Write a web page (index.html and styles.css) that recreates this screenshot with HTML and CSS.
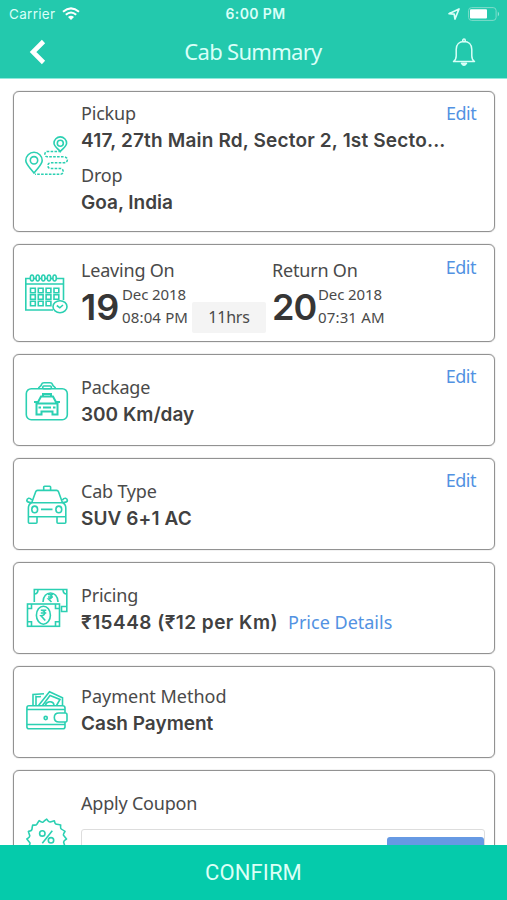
FILE: index.html
```html
<!DOCTYPE html>
<html lang="en">
<head>
<meta charset="utf-8">
<title>Cab Summary</title>
<link rel="stylesheet" href="styles.css">
</head>
<body>
<div class="screen">
  <header class="header">
    <div class="status">
      <div class="status-left"><span class="carrier">Carrier</span>
        <svg class="wifi" viewBox="0 0 18 13" width="18" height="13" fill="none" stroke="currentColor" stroke-width="2"><path d="M1 4.8Q9-2 17 4.8M3.8 7.8Q9 3.2 14.2 7.8"/><path d="M6 10Q9 7.6 12 10L9 13Z" fill="currentColor" stroke="none"/></svg>
      </div>
      <span class="clock">6:00 PM</span>
      <div class="status-right">
        <svg viewBox="0 0 12 12" width="12" height="12" fill="none" stroke="currentColor" stroke-width="1.7" stroke-linejoin="round"><path d="M1 5.7 11 1 7 11 6.2 6.1Z"/></svg>
        <svg viewBox="0 0 32 14" width="32" height="14"><rect x=".6" y=".6" width="27.5" height="12.8" rx="3" fill="none" stroke="#7fdccb"/><rect x="2" y="2.2" width="17" height="9.4" rx="1" fill="#fff"/><path d="M29.8 4.5Q32.5 7 29.8 9.5Z" fill="#8fe3d4"/></svg>
      </div>
    </div>
    <div class="nav">
      <svg class="back" viewBox="0 0 17 26" width="17" height="26" fill="none" stroke="#fff" stroke-width="4.6"><path d="M14.5 2.5 4 13 14.5 23.5"/></svg>
      <h1 class="title">Cab Summary</h1>
      <svg class="bell" viewBox="0 0 24 29" width="24" height="29" fill="none" stroke="currentColor" stroke-width="1.5" stroke-linejoin="round"><path d="M1.500 23.500H22.500Q19.800 21.500 19.800 18V11.500C19.800 6.500 16.500 3.500 12 3.500S4.200 6.500 4.200 11.500V18Q4.200 21.500 1.500 23.500Z"/><circle cx="12" cy="2.400" r="1.300"/><path d="M9.500 25.300Q12 29 14.500 25.300Z" fill="currentColor"/></svg>
    </div>
  </header>

  <main class="cards">
    <section class="card card-route">
      <svg class="icon" viewBox="25 139.500 44 44"><path d="M34 172.500C30 167 25.800 164 25.800 160A8.200 8.200 0 0 1 42.200 160C42.200 164 38 167 34 172.500Z"/><circle cx="34" cy="159.800" r="3.700"/><path d="M60.300 151C57 147.500 54 145.500 54 142.700A6.300 6.300 0 0 1 66.600 142.700C66.600 145.500 63.600 147.500 60.300 151Z"/><circle cx="60.300" cy="142.700" r="3"/><path stroke-dasharray="2.600 1.300" d="M61 151H47.500C44 151 44 156.300 47.500 156.300H64C68.500 156.300 68.500 162.300 64 162.300H50.500C47 162.300 47 168 50.500 168H60.500C64 168 64 173.800 60.500 173.800H35"/></svg>
      <div class="body">
        <div class="label">Pickup</div>
        <div class="value v-addr">417, 27th Main Rd, Sector 2, 1st Secto...</div>
        <div class="label second">Drop</div>
        <div class="value">Goa, India</div>
      </div>
      <a class="edit">Edit</a>
    </section>

    <section class="card card-dates">
      <svg class="icon" viewBox="25 271 44 44"><path d="M53 310H25.800V278.500H63.500V300M25.800 284H63.500"/><g fill="#fff"><ellipse cx="32" cy="278" rx="1.700" ry="3"/><ellipse cx="37.700" cy="278" rx="1.700" ry="3"/><ellipse cx="43.300" cy="278" rx="1.700" ry="3"/><ellipse cx="49" cy="278" rx="1.700" ry="3"/><ellipse cx="54.600" cy="278" rx="1.700" ry="3"/></g><path d="M30.500 288.300h4.800v4.500h-4.800zM38.300 288.300h4.800v4.500h-4.800zM46.100 288.300h4.800v4.500h-4.800zM54 288.300h4.800v4.500h-4.800zM30.500 294.800h4.800v4.500h-4.800zM38.300 294.800h4.800v4.500h-4.800zM46.100 294.800h4.800v4.500h-4.800zM54 294.800h4.800v4.500h-4.800zM30.500 301.300h4.800v4.500h-4.800zM38.300 301.300h4.800v4.500h-4.800zM46.100 301.300h4.800v4.500h-4.800z"/><ellipse cx="60" cy="306.700" rx="7" ry="6" fill="#fff"/><path d="M56.800 305.500 59.800 307.800 63 305"/></svg>
      <div class="body trip">
        <div class="leg">
          <div class="label">Leaving On</div>
          <div class="date"><span class="day">19</span><span class="when"><span>Dec 2018</span><span class="time">08:04 PM</span></span></div>
        </div>
        <div class="hours">11hrs</div>
        <div class="leg">
          <div class="label">Return On</div>
          <div class="date"><span class="day day-wide">20</span><span class="when"><span>Dec 2018</span><span class="time">07:31 AM</span></span></div>
        </div>
      </div>
      <a class="edit">Edit</a>
    </section>

    <section class="card">
      <svg class="icon" viewBox="25 378 44 44"><rect x="26.300" y="388.700" width="41" height="31" rx="5"/><path d="M38.500 388.700C38.500 386.500 41 387 41.500 384.500Q42 382.700 44 382.700H50Q52 382.700 52.500 384.500C53 387 55.500 386.500 55.500 388.700"/><rect x="42.800" y="386" width="8.500" height="2.700" rx="1"/><path stroke-width="2" d="M43 396.500V394H51V396.500M37.800 402.500 41 396.500H53L56.200 402.500M34 402H37.800V404M60 402H56.200V404M36.500 403.500H57.500V414.500H52.500V411.500H41.500V414.500H36.500ZM43 407.500H51M38.500 407.500H41M53 407.500H55.500"/></svg>
      <div class="body"><div class="label">Package</div><div class="value">300 Km/day</div></div>
      <a class="edit">Edit</a>
    </section>

    <section class="card">
      <svg class="icon" viewBox="25 482 44 44"><path d="M43.700 490V487Q43.700 486.300 44.500 486.300H49.800Q50.600 486.300 50.600 487V490M31.700 502.700 35.700 491.800Q36.200 490.400 37.600 490.400H56.600Q58 490.400 58.500 491.800L62.500 502.700M31.700 502.700H62.500Q65.800 504.200 65.800 508V516.700H28.400V508Q28.400 504.200 31.700 502.700ZM28.400 516.700V522.200Q28.400 523.200 29.400 523.200H36Q37 523.200 37 522.200V516.700M57 516.700V522.200Q57 523.200 58 523.200H64.800Q65.800 523.200 65.800 522.200V516.700M41 509.400H52.500M31.700 500Q30.500 498 28.600 498.200Q26.800 498.800 26.800 500.500Q27.200 502.500 31 502.500M62.500 500Q63.700 498 65.600 498.200Q67.400 498.800 67.400 500.500Q67 502.500 63 502.500"/><ellipse cx="34.700" cy="509.400" rx="2.900" ry="3.300"/><ellipse cx="58.800" cy="509.400" rx="2.900" ry="3.300"/></svg>
      <div class="body"><div class="label">Cab Type</div><div class="value v-suv">SUV 6+1 AC</div></div>
      <a class="edit">Edit</a>
    </section>

    <section class="card">
      <svg class="icon" viewBox="25 586 44 44"><path d="M34.300 602V589.500H66.800V611.500H61.500V606.500H66.800M34.300 594Q38 594 38 589.500M63 589.500Q63 594 66.800 594M43 602C43 590 58 590 58 602"/><rect x="27.500" y="604" width="32" height="22.300"/><ellipse cx="43.400" cy="615.200" rx="7" ry="9"/><path d="M27.500 608.500H31.500V604M59.500 608.500H55.500V604M27.500 621.800H31.500V626.300M59.500 621.800H55.500V626.300"/><path d="M40.800 610.300H46.300M40.800 613H46.300M40.800 610.300C46 610 46 615.700 41 615.700L45.300 620.500M48 594.500H53M48 597H53M48.500 594.500C52.500 594.500 52.500 599 48.500 599L51.500 602"/></svg>
      <div class="body"><div class="label">Pricing</div><div class="value-row"><span class="value v-price">₹15448 (₹12 per Km)</span><a class="link">Price Details</a></div></div>
    </section>

    <section class="card card-pay">
      <svg class="icon" viewBox="25 690 44 44"><path d="M33 705.500V694.500L44 693.800M41 696.500Q38 697 36 696.500V705.500M38.500 705.500 49.500 691.800 62.500 697.800V705.500M42.500 705.500 50 695.500 60 699.500 56.500 705.500M45.500 705C47 700.500 53.500 701 54 705"/><path d="M65 712.800V708Q65 705.800 62.500 705.800H28.900Q26.900 705.800 26.900 708V726.800Q26.900 728.800 28.900 728.800H63Q65 728.800 65 726.800V722M26.900 709.500H65M26.900 724.500H65M65.500 713H59Q54.300 713 54.300 717.500T59 722H65.500Q67 722 67 720V715Q67 713 65.500 713Z"/><circle cx="45.700" cy="718" r="1.600"/></svg>
      <div class="body"><div class="label t-pay">Payment Method</div><div class="value">Cash Payment</div></div>
    </section>

    <section class="card card-coupon">
      <svg class="icon" viewBox="25 818 44 44"><path stroke-linejoin="round" transform="translate(46.700 839)" d="M0-19.800Q2-16.500 3.500-17T7.600-18.300Q8.200-14.800 9.900-14.700T14-14Q13.500-10.500 14.700-9.900T18.300-7.600Q16-4.600 17-3.500T19.800 0Q16.500 2 17 3.500T18.300 7.600Q14.800 8.200 14.700 9.900T14 14Q10.500 13.500 9.900 14.700T7.600 18.300Q4.600 16 3.500 17T0 19.800Q-2 16.500-3.500 17T-7.600 18.300Q-8.200 14.800-9.900 14.700T-14 14Q-13.500 10.500-14.700 9.900T-18.300 7.600Q-16 4.600-17 3.500T-19.800 0Q-16.500-2-17-3.500T-18.300-7.600Q-14.800-8.200-14.700-9.900T-14-14Q-10.500-13.500-9.900-14.700T-7.600-18.300Q-4.600-16-3.500-17T0-19.800Z"/><circle cx="42.300" cy="833.400" r="2.700"/><circle cx="51" cy="840.300" r="2.700"/><path d="M42.300 843.300 52.300 830.700"/></svg>
      <div class="body"><div class="label">Apply Coupon</div><div class="coupon"><div class="apply"></div></div></div>
    </section>
  </main>

  <footer class="confirm">CONFIRM</footer>
</div>
</body>
</html>
```
FILE: styles.css
```css
* { box-sizing: border-box; }
body { margin: 0; background: #fff; }
.screen {
  width: 507px; height: 900px; overflow: hidden;
  display: flex; flex-direction: column;
  font-family: "Noto Sans", sans-serif; color: #4a4a4a;
}
.header { flex: none; height: 79px; background: #23c9ad; border-bottom: 1px solid #8eeadc; color: #d9fff8; }
.status {
  height: 27px; padding: 0 7px 0 9px;
  display: grid; grid-template-columns: 1fr auto 1fr; align-items: center;
  font-family: Inter, sans-serif; font-size: 13.5px;
}
.status-left { display: flex; align-items: center; gap: 7px; }
.status-right { display: flex; align-items: center; justify-content: flex-end; gap: 8px; }
.carrier { letter-spacing: .3px; }
.wifi { color: #fff; }
.clock { font-weight: 600; font-size: 14px; letter-spacing: .4px; padding-left: 2px; }
.nav { height: 50px; padding: 0 31px 0 29px; display: flex; align-items: center; justify-content: space-between; }
.title { margin: -2px 0 0 8px; font-size: 22px; font-weight: 400; letter-spacing: -.7px; }
.bell { margin-top: 1px; }

.cards {
  flex: 1; min-height: 0; overflow: hidden;
  padding: 12px 12px 0 13px;
  display: flex; flex-direction: column; gap: 12px;
}
.card {
  flex: none; height: 92px; padding: 0 18px 0 11px;
  display: flex; align-items: center; gap: 12px;
  border: 1px solid #929292; border-radius: 6px; box-shadow: 0 0 1px #777;
}
.icon { flex: none; width: 44px; height: 44px; overflow: visible; fill: none; stroke: #2bd0b2; stroke-width: 1.6; }
.body { flex: 1; min-width: 0; align-self: flex-start; padding-top: 19px; }
.label { height: 27px; line-height: 26px; font-size: 18px; letter-spacing: -.2px; white-space: nowrap; }
.value {
  height: 27px; line-height: 27px; white-space: nowrap;
  font-family: Inter, "Noto Sans", sans-serif; font-weight: 600; font-size: 19px; color: #414141;
}
.v-addr { letter-spacing: .17px; }
.v-suv { letter-spacing: .1px; }
.v-price { letter-spacing: .46px; }
.edit { align-self: flex-start; margin-top: 8px; line-height: 26px; font-size: 18px; letter-spacing: -.5px; color: #5292e2; }
.card-route { height: 141px; }
.card-route .body { padding-top: 8px; flex: 0 0 353px; }
.card-route .second { margin-top: 8px; }

.card-dates { height: 98px; }
.card-dates .edit { margin-top: 9px; }
.card-dates .body { padding-top: 12px; }
.trip { display: flex; }
.leg { flex: none; width: 111px; }
.date { display: flex; height: 46px; }
.day { flex: none; width: 41px; font: 600 36px/46px Inter, sans-serif; color: #363636; }
.day-wide { width: 46px; letter-spacing: -1px; }
.when { display: flex; flex-direction: column; margin-top: -1px; font-size: 15px; line-height: 23px; white-space: nowrap; letter-spacing: -.1px; }
.time { letter-spacing: .15px; }
.hours {
  flex: none; width: 74px; height: 31px; margin: 45px 6px 0 0;
  background: #f4f4f4; border-radius: 2px; text-align: center; font-size: 16px; line-height: 30px; letter-spacing: -.2px;
}
.value-row { display: flex; gap: 10px; }
.link { line-height: 26px; font-size: 18px; color: #5292e2; white-space: nowrap; }
.card-pay .body { padding-top: 16px; }
.t-pay { letter-spacing: 0; }

.card-coupon { height: 140px; padding-right: 9px; }
.card-coupon .icon { align-self: flex-start; margin-top: 47px; }
.coupon {
  margin-top: 12px; height: 46px; padding-top: 7px;
  border: 1px solid #ddd; border-radius: 3px; display: flex; justify-content: flex-end;
}
.apply { width: 97px; height: 32px; background: #6699e3; border-radius: 3px 3px 0 0; }

.confirm {
  flex: none; height: 55px; background: #05cbab; color: #dcfff6;
  text-align: center; font: 400 22px/55px Roboto, sans-serif; letter-spacing: .1px;
}
```
